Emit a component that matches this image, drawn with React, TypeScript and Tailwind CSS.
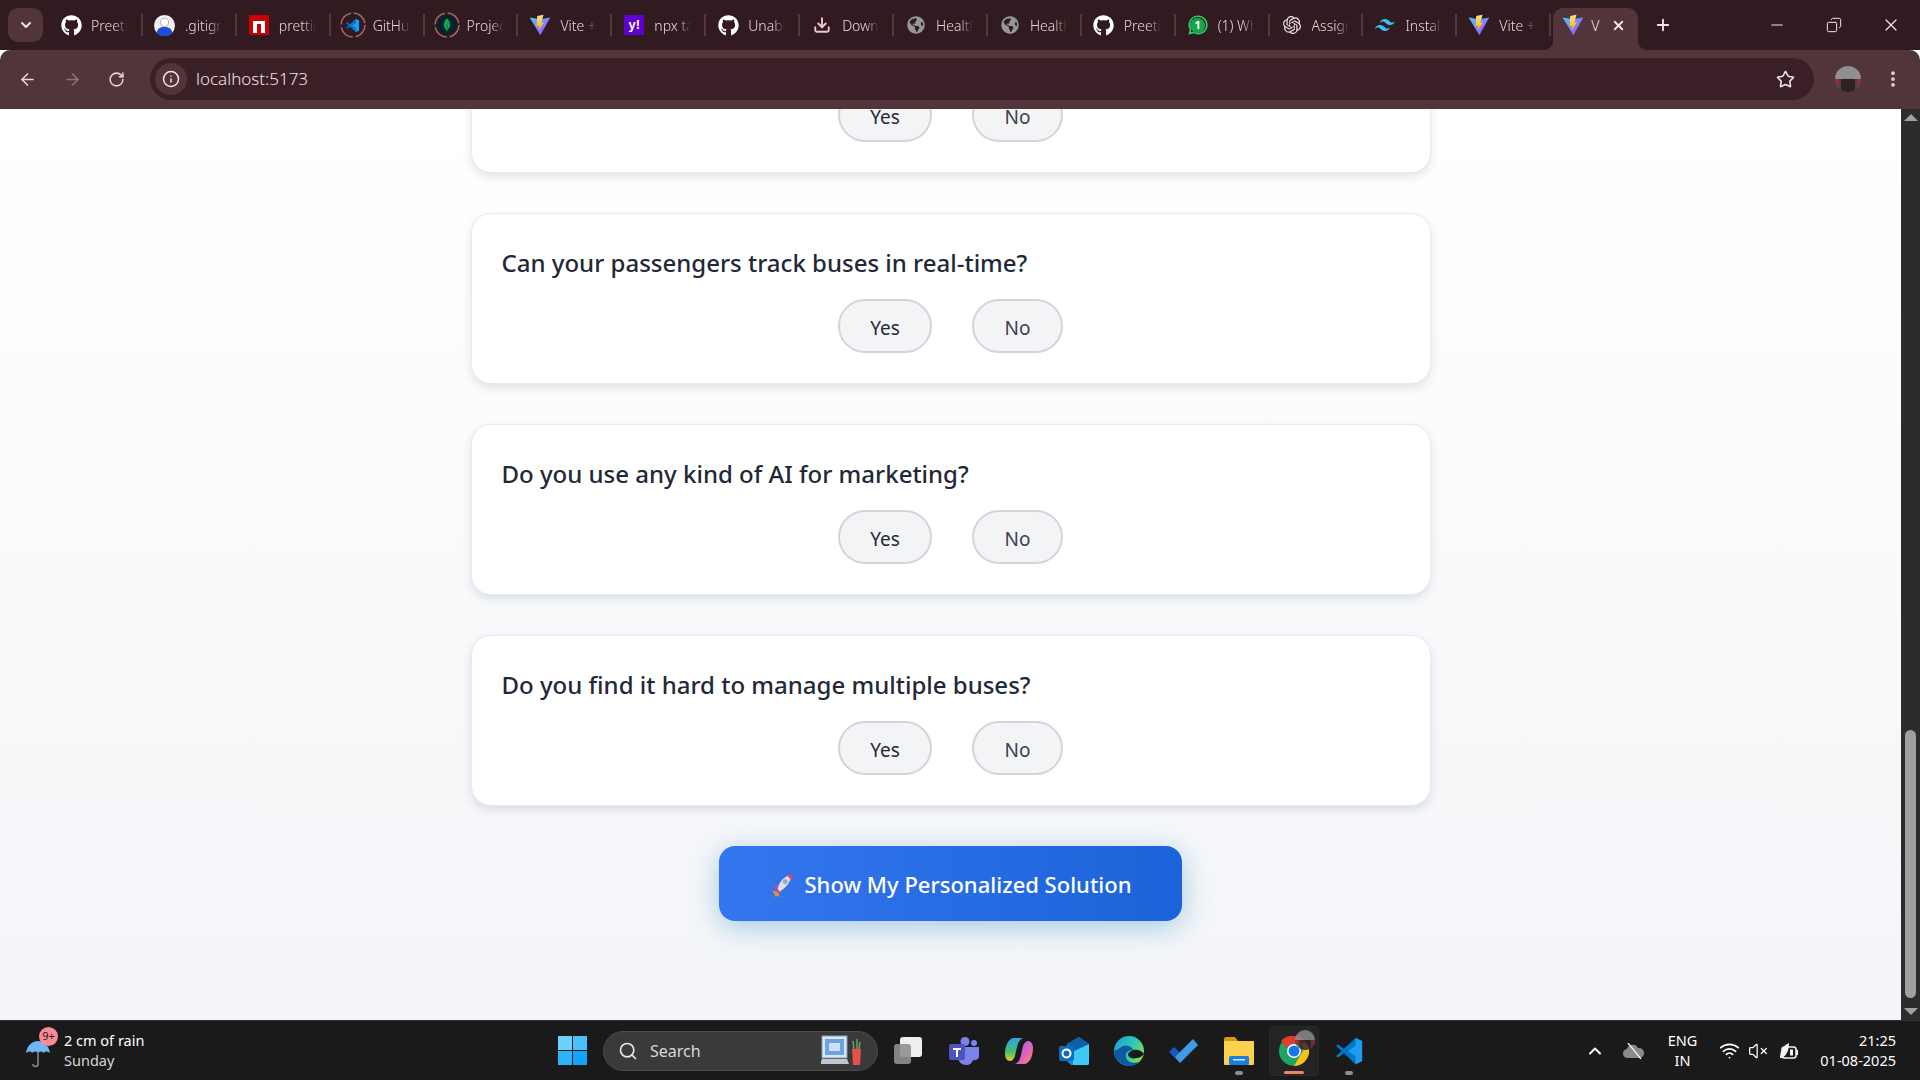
import type { ReactNode } from "react"
import { ArrowLeft, ArrowRight, RotateCw, Info, Star, ChevronDown, ChevronUp, Plus, Minus, X, Download, Search, Copy, EllipsisVertical, VolumeX, Wifi } from "lucide-react"
import { FaGithub, FaGlobeAmericas, FaWhatsapp } from "react-icons/fa"
import { SiOpenai, SiTailwindcss, SiMongodb } from "react-icons/si"

function ViteIcon() {
  return (
    <svg width="22" height="22" viewBox="0 0 32 32">
      <defs>
        <linearGradient id="vite-a" x1="0" y1="0" x2="1" y2="1">
          <stop offset="0" stopColor="#41d1ff" />
          <stop offset="1" stopColor="#bd34fe" />
        </linearGradient>
        <linearGradient id="vite-b" x1="0" y1="0" x2="0" y2="1">
          <stop offset="0" stopColor="#ffea83" />
          <stop offset="1" stopColor="#ffa800" />
        </linearGradient>
      </defs>
      <path d="M1 5l15 2.500L31 5 16.500 31z" fill="url(#vite-a)" />
      <path d="M21 1l-9 2-1 15 4-1-1 7 8-12-4 1 3-12z" fill="url(#vite-b)" />
    </svg>
  )
}

function VsCodeIcon({ size = 20 }: { size?: number }) {
  return (
    <svg width={size} height={size} viewBox="0 0 32 32">
      <path d="M23 2l7 3.400v21.200L23 30 10.500 18.500 4.500 23 2 21.500 8 16 2 10.500 4.500 9l6 4.500z" fill="#0078c8" />
      <path d="M23 2l7 3.400v21.200L23 30V21.500L15 16l8-5.500z" fill="#1f9cf0" />
    </svg>
  )
}

function DashedRing({ children }: { children: ReactNode }) {
  return (
    <div className="relative flex h-[26px] w-[26px] items-center justify-center">
      <svg className="absolute inset-0" width="26" height="26" viewBox="0 0 26 26">
        <circle cx="13" cy="13" r="12" fill="none" stroke="#a8686f" strokeWidth="1.500" strokeDasharray="16 3" />
      </svg>
      {children}
    </div>
  )
}

const tabs: { title: string; icon: ReactNode }[] = [
  { title: "Preeti", icon: <FaGithub size={21} color="#fff" /> },
  {
    title: ".gitignore",
    icon: (
      <svg width="21" height="21" viewBox="0 0 20 20">
        <circle cx="10" cy="10" r="10" fill="#f1f1f1" />
        <circle cx="10" cy="7" r="4" fill="#fff" stroke="#888" strokeWidth="0.600" />
        <path d="M2.500 17c1-4 3-5.500 7.500-5.500s6.500 1.500 7.500 5.500a10 10 0 0 1-15 0z" fill="#1d4ed8" />
      </svg>
    ),
  },
  {
    title: "prettier",
    icon: (
      <div className="flex h-5 w-5 items-center justify-center bg-[#cb0000]">
        <div className="mt-[3px] h-[12px] w-[12px] border-x-[4px] border-t-[3px] border-white" />
      </div>
    ),
  },
  { title: "GitHub", icon: <DashedRing><VsCodeIcon size={15} /></DashedRing> },
  {
    title: "Project",
    icon: (
      <DashedRing>
        <div className="flex h-5 w-5 items-center justify-center rounded-full bg-[#06232b]">
          <SiMongodb size={14} color="#13aa52" />
        </div>
      </DashedRing>
    ),
  },
  { title: "Vite + React", icon: <ViteIcon /> },
  {
    title: "npx tailwind",
    icon: (
      <div className="flex h-5 w-5 items-center justify-center bg-[#5f01d1] font-['Liberation_Sans',sans-serif] text-[13px] font-bold text-white">
        y!
      </div>
    ),
  },
  { title: "Unable", icon: <FaGithub size={21} color="#fff" /> },
  { title: "Download", icon: <Download size={18} color="#ecc9cd" strokeWidth={2.500} /> },
  { title: "Health", icon: <FaGlobeAmericas size={18} color="#93979c" /> },
  { title: "Health", icon: <FaGlobeAmericas size={18} color="#93979c" /> },
  { title: "Preeti", icon: <FaGithub size={21} color="#fff" /> },
  {
    title: "(1) WhatsApp",
    icon: (
      <div className="relative flex h-5 w-5 items-center justify-center">
        <FaWhatsapp size={22} color="#25d366" className="absolute" />
        <div className="absolute flex h-[15px] w-[15px] items-center justify-center rounded-full bg-[#1aa64a] text-[11px] font-bold text-white">
          1
        </div>
      </div>
    ),
  },
  { title: "Assignment", icon: <SiOpenai size={18} color="#f0e4e6" /> },
  { title: "Installation", icon: <SiTailwindcss size={20} color="#38bdf8" /> },
  { title: "Vite + React", icon: <ViteIcon /> },
]

function Tab({ title, icon }: { title: string; icon: ReactNode }) {
  return (
    <div className="flex h-[34px] w-[93.900px] shrink-0 items-center border-r-2 border-[#54383e] [border-image:linear-gradient(to_bottom,transparent_20%,#54383e_20%,#54383e_80%,transparent_80%)_1]">
      <div className="flex w-[42px] shrink-0 items-center justify-center pl-[2px]">{icon}</div>
      <div className="w-[37px] overflow-hidden whitespace-nowrap text-[14px] font-light text-[#e8d5d8] [mask-image:linear-gradient(to_right,black_65%,transparent)]">
        {title}
      </div>
    </div>
  )
}

function ActiveTab() {
  return (
    <div className="relative ml-[2px] flex h-[42px] w-[85px] shrink-0 items-center self-end rounded-t-[10px] bg-[#51353b] pb-[8px] pl-[9px]">
      <ViteIcon />
      <div className="ml-[7px] w-[9px] overflow-hidden whitespace-nowrap text-[14px] font-light text-[#efe1e3]">Vite</div>
      <X size={15} strokeWidth={3} color="#f2e6e8" className="ml-[11px]" />
      <div className="absolute -left-[10px] bottom-0 h-[10px] w-[10px] bg-[radial-gradient(circle_at_0_0,transparent_10px,#51353b_10.500px)]" />
      <div className="absolute -right-[10px] bottom-0 h-[10px] w-[10px] bg-[radial-gradient(circle_at_100%_0,transparent_10px,#51353b_10.500px)]" />
    </div>
  )
}

function Avatar({ size }: { size: number }) {
  return (
    <svg width={size} height={size} viewBox="0 0 26 26">
      <clipPath id={`av-${size}`}>
        <circle cx="13" cy="13" r="13" />
      </clipPath>
      <g clipPath={`url(#av-${size})`}>
        <rect width="26" height="26" fill="#8f9093" />
        <rect y="13" width="26" height="13" fill="#5b3a40" />
        <rect x="6" y="13" width="14" height="13" fill="#2b2022" />
        <rect y="13" width="4" height="6" fill="#8c2b38" />
        <rect x="22" y="13" width="4" height="6" fill="#8c2b38" />
      </g>
    </svg>
  )
}

function BrowserChrome() {
  return (
    <header className="shrink-0 font-['Noto_Sans',sans-serif]">
      <div className="flex h-[50px] items-center bg-[#311b20] pl-[8px]">
        <div className="flex h-[34px] w-[35px] shrink-0 items-center justify-center rounded-[10px] bg-[#51353b]">
          <ChevronDown size={16} strokeWidth={3} color="#f2e6e8" />
        </div>
        <div className="ml-[6px] flex items-center">
          {tabs.map((tab, i) => (
            <Tab key={i} title={tab.title} icon={tab.icon} />
          ))}
        </div>
        <ActiveTab />
        <Plus size={18} strokeWidth={2.500} color="#f2e6e8" className="ml-[16px]" />
        <div className="ml-auto flex items-center">
          <Minus size={18} strokeWidth={1.500} color="#f2e6e8" className="mr-[40px]" />
          <Copy size={16} strokeWidth={1.500} color="#f2e6e8" className="mr-[39px] -scale-x-100" />
          <X size={20} strokeWidth={1.500} color="#f2e6e8" className="mr-[19px]" />
        </div>
      </div>
      <div className="flex h-[59px] items-center rounded-t-[10px] bg-[#51353b] pb-[1px]">
        <div className="ml-[18px] flex items-center gap-[26px]">
          <ArrowLeft size={19} color="#e9d2d5" strokeWidth={2} />
          <ArrowRight size={19} color="#8d7378" strokeWidth={2} />
          <RotateCw size={17} color="#e9d2d5" strokeWidth={2.200} />
        </div>
        <div className="ml-[25px] flex h-[42px] w-[1664px] items-center rounded-full bg-[#3a2026] pl-[5px]">
          <div className="flex h-[32px] w-[32px] items-center justify-center rounded-full bg-[#51353b]">
            <Info size={18} color="#f2e6e8" />
          </div>
          <span className="ml-[9px] text-[17px] font-light text-[#f0e4e6]">localhost:5173</span>
          <Star size={19} color="#f2e6e8" className="ml-auto mr-[19px]" />
        </div>
        <div className="ml-[21px]">
          <Avatar size={26} />
        </div>
        <EllipsisVertical size={20} color="#e9d2d5" strokeWidth={2.500} className="ml-[22px]" />
      </div>
    </header>
  )
}

const questions = [
  "Do you send tickets to passengers digitally?",
  "Can your passengers track buses in real-time?",
  "Do you use any kind of AI for marketing?",
  "Do you find it hard to manage multiple buses?",
]

function QuestionCard({ question }: { question: string }) {
  return (
    <div className="shrink-0 rounded-[20px] border border-[#e2ebf6] bg-white px-[30px] pb-[30px] pt-[31px] shadow-[0_4px_10px_rgba(30,41,59,0.12)]">
      <h3 className="text-[24px] font-medium leading-[36px] text-[#1f2937]">{question}</h3>
      <div className="mt-[18px] flex justify-center gap-[40px]">
        <button className="h-[54px] w-[94px] rounded-full border-2 border-[#d1d5db] bg-[#f3f4f6] pt-[4px] text-[19px] text-[#1f2937]">Yes</button>
        <button className="h-[54px] w-[91px] rounded-full border-2 border-[#d1d5db] bg-[#f3f4f6] pt-[4px] text-[19px] text-[#374151]">No</button>
      </div>
    </div>
  )
}

function Rocket() {
  return (
    <svg width="26" height="26" viewBox="0 0 24 24">
      <path d="M3 17l4 1 2 2 1 3-3-1-1 1-1-3-2-3z" fill="#f28b2c" />
      <path d="M5 13l4-1-3 5zM11 19l1-4-5 3z" fill="#f43f6e" />
      <path d="M8 16C9 9 14 4 20 3c0 7-4 11-10 15z" fill="#e5dde2" />
      <path d="M17 3.500l5-1.500-1 6z" fill="#f43f5e" />
      <circle cx="15" cy="9" r="2" fill="#7fb2e5" stroke="#9aa0a8" strokeWidth="0.600" />
    </svg>
  )
}

function Scrollbar() {
  return (
    <div className="flex w-[19px] shrink-0 flex-col items-center bg-[#2c2c2c]">
      <div className="mt-[5px] h-0 w-0 border-x-[7px] border-b-[7px] border-x-transparent border-b-[#a0a0a0]" />
      <div className="flex flex-1 items-end pb-[10px]">
        <div className="h-[268px] w-[11px] rounded-full bg-[#a0a0a0]" />
      </div>
      <div className="mb-[5px] h-0 w-0 border-x-[7px] border-t-[7px] border-x-transparent border-t-[#a0a0a0]" />
    </div>
  )
}

function Page() {
  return (
    <div className="flex min-h-0 flex-1">
      <main className="flex min-w-0 flex-1 flex-col items-center justify-end overflow-hidden bg-gradient-to-b from-white to-[#f3f5f8] pb-[99px] font-['Noto_Sans',sans-serif]">
        <div className="flex w-[960px] shrink-0 flex-col gap-[40px]">
          {questions.map((q) => (
            <QuestionCard key={q} question={q} />
          ))}
        </div>
        <button className="mt-[40px] flex h-[75px] w-[463px] shrink-0 items-center justify-center gap-[9px] rounded-[16px] bg-gradient-to-r from-[#3476ee] to-[#1b63d8] pt-[2px] text-[22px] font-medium text-white shadow-[0_6px_28px_rgba(56,140,190,0.42)]">
          <Rocket />
          Show My Personalized Solution
        </button>
      </main>
      <Scrollbar />
    </div>
  )
}

function Umbrella() {
  return (
    <svg width="24" height="36" viewBox="0 0 24 36">
      <path d="M0 20C1 12 7 8 12 8s11 4 12 12c-3-2-5-2-6 0-2-2-4-2-6 0-2-2-4-2-6 0-1-2-3-2-6 0z" fill="#6eb7f2" />
      <path d="M12 18v13a2.500 2.500 0 0 1-5 0" fill="none" stroke="#8b8b8b" strokeWidth="1.500" />
    </svg>
  )
}

function WindowsLogo() {
  return (
    <div className="grid h-[29px] w-[29px] grid-cols-2 gap-[1px]">
      <div className="bg-[#6fd0fa]" />
      <div className="bg-[#4cc1f9]" />
      <div className="bg-[#2db2fb]" />
      <div className="bg-[#12a4fb]" />
    </div>
  )
}

function SearchArt() {
  return (
    <svg width="42" height="34" viewBox="0 0 42 34">
      <rect x="1" y="2" width="25" height="22" fill="#d6e7f7" stroke="#8f9bb0" />
      <rect x="4" y="5" width="19" height="16" fill="#6da3e3" />
      <rect x="8" y="9" width="11" height="8" fill="#cfe0f5" />
      <path d="M1 25h25l2 5H-1z" fill="#c3c6cc" />
      <path d="M31 15h9l-1 16h-7z" fill="#e2514a" />
      <path d="M33 15l-1-8M36 15v-10M38 15l1-7" stroke="#6ea060" strokeWidth="1.500" />
    </svg>
  )
}

function TaskbarIcons() {
  return (
    <div className="flex items-center">
      {/* task view */}
      <div className="relative ml-[16px] h-[27px] w-[31px]">
        <div className="absolute right-[3px] top-0 h-[20px] w-[22px] rounded-[3px] bg-[#efefef]" />
        <div className="absolute bottom-0 left-0 h-[20px] w-[17px] rounded-[3px] bg-[#8f8f8f]/90" />
      </div>
      {/* teams */}
      <svg className="ml-[24px]" width="30" height="28" viewBox="0 0 30 28">
        <circle cx="25" cy="6" r="3" fill="#7b83eb" />
        <circle cx="16" cy="4.500" r="4.500" fill="#7b83eb" />
        <path d="M9 10h21v9c0 3-3 5-6 4-1 3-3 5-7 5-5 0-8-4-8-8z" fill="#7b83eb" />
        <rect x="0" y="7" width="16" height="16" rx="2" fill="#4b53bc" />
        <path d="M4 11h8v2h-3v7H7v-7H4z" fill="#fff" />
      </svg>
      {/* copilot */}
      <svg className="ml-[26px]" width="28" height="28" viewBox="0 0 28 28">
        <defs>
          <linearGradient id="cop-a" x1="0" y1="0" x2="0" y2="1">
            <stop offset="0" stopColor="#2aa5e8" />
            <stop offset="0.600" stopColor="#45c06c" />
            <stop offset="1" stopColor="#f0c52e" />
          </linearGradient>
          <linearGradient id="cop-b" x1="0" y1="0" x2="1" y2="1">
            <stop offset="0" stopColor="#7d6cf0" />
            <stop offset="0.600" stopColor="#e75fc0" />
            <stop offset="1" stopColor="#f79a4a" />
          </linearGradient>
        </defs>
        <path d="M9 1h9c-3 1-5 4-6 9l-2 9c-1 3-3 5-5 5-3 0-5-3-5-7 0-9 4-16 9-16z" fill="url(#cop-a)" />
        <path d="M19 27h-9c3-1 5-4 6-9l2-9c1-3 3-5 5-5 3 0 5 3 5 7 0 9-4 16-9 16z" fill="url(#cop-b)" />
      </svg>
      {/* outlook */}
      <svg className="ml-[26px]" width="30" height="28" viewBox="0 0 30 28">
        <path d="M8 7l12-7 10 7v19a2 2 0 0 1-2 2H12l-4-4z" fill="#1490df" />
        <path d="M14 15l16-8v19a2 2 0 0 1-2 2H14z" fill="#3ccbf4" />
        <path d="M8 7l12-7 10 7-16 7z" fill="#0a5fa8" />
        <rect x="0" y="9" width="15" height="15" rx="2" fill="#0f6cbd" />
        <circle cx="7.500" cy="16.500" r="4" fill="none" stroke="#fff" strokeWidth="2" />
      </svg>
      {/* edge */}
      <svg className="ml-[25px]" width="30" height="30" viewBox="0 0 30 30">
        <defs>
          <linearGradient id="edge-a" x1="0" y1="0" x2="1" y2="0.600">
            <stop offset="0" stopColor="#1b9de2" />
            <stop offset="0.600" stopColor="#30c7b0" />
            <stop offset="1" stopColor="#7fdc5c" />
          </linearGradient>
        </defs>
        <circle cx="15" cy="15" r="15" fill="url(#edge-a)" />
        <path d="M0 15a15 15 0 0 0 25 11c-6 2-12 0-13-5-1-4 2-7 7-7-2-5-9-6-13-2-3 2-5 2-6 3z" fill="#0c59a4" />
        <path d="M30 18c-2-3-6-5-11-4-3 1-5 3-5 5 1 3 5 4 9 3 3 0 5-2 7-4z" fill="#1a1a1a" />
      </svg>
      {/* todo */}
      <svg className="ml-[25px]" width="30" height="24" viewBox="0 0 30 24">
        <path d="M0 13l5-5 11 11-5 5z" fill="#185abd" />
        <path d="M11 24L29 6l-5-6L6 18z" fill="#3f9ae8" />
      </svg>
      {/* explorer */}
      <div className="relative ml-[25px] h-[28px] w-[30px]">
        <svg width="30" height="28" viewBox="0 0 30 28">
          <path d="M0 2a2 2 0 0 1 2-2h9l3 4h16v6H0z" fill="#d99a0b" />
          <rect x="0" y="4" width="30" height="24" rx="1" fill="#fcd04d" />
          <rect x="5" y="19" width="20" height="9" rx="1.500" fill="#1a7fd6" />
          <rect x="9" y="22" width="12" height="1.500" fill="#cfe6fa" />
        </svg>
        <div className="absolute -bottom-[10px] left-[11px] h-[4px] w-[8px] rounded-full bg-[#8d8d8d]" />
      </div>
      {/* chrome, active */}
      <div className="relative ml-[15px] flex h-[50px] w-[50px] items-center justify-center rounded-[4px] border border-[#2a2a2a] bg-[#242424]">
        <svg width="30" height="30" viewBox="0 0 30 30">
          <circle cx="15" cy="15" r="15" fill="#1ea362" />
          <path d="M15 0a15 15 0 0 1 13 7.500H15a7.500 7.500 0 0 0-7 5L2 5A15 15 0 0 1 15 0z" fill="#e33b2e" />
          <path d="M28 7.500A15 15 0 0 1 15 30l6.500-11a7.500 7.500 0 0 0 0-11.500z" fill="#fbc116" />
          <circle cx="15" cy="15" r="7" fill="#fff" />
          <circle cx="15" cy="15" r="5.500" fill="#1a73e8" />
        </svg>
        <div className="absolute right-[3px] top-[3px] opacity-80">
          <Avatar size={20} />
        </div>
        <div className="absolute bottom-[1px] h-[3px] w-[20px] rounded-full bg-[#f0826a]" />
      </div>
      {/* vscode */}
      <div className="relative ml-[15px] h-[30px] w-[30px]">
        <VsCodeIcon size={30} />
        <div className="absolute -bottom-[9px] left-[11px] h-[4px] w-[8px] rounded-full bg-[#8d8d8d]" />
      </div>
    </div>
  )
}

function Taskbar() {
  return (
    <footer className="relative flex h-[60px] shrink-0 items-center border-t border-[#333] bg-[#1a1a1a] font-['Noto_Sans',sans-serif] text-white">
      <div className="relative ml-[26px] flex items-center">
        <Umbrella />
        <div className="absolute left-[13px] -top-[5px] flex h-[19px] w-[19px] items-center justify-center rounded-full bg-[#f98a94] text-[11px] text-[#1a1a1a]">9+</div>
        <div className="ml-[14px] -mt-[2px] text-[14.500px] leading-[20px]">
          <div>2 cm of rain</div>
          <div className="text-[#d6d6d6]">Sunday</div>
        </div>
      </div>
      <div className="absolute left-[558px] flex items-center">
        <WindowsLogo />
        <div className="ml-[16px] flex h-[40px] w-[275px] items-center rounded-full border border-[#4a4a4a] bg-[#3a3a3a] pl-[14px]">
          <Search size={20} color="#e6e6e6" strokeWidth={2} />
          <span className="ml-[12px] text-[16px] text-[#d8d8d8]">Search</span>
          <div className="ml-auto mr-[14px]"><SearchArt /></div>
        </div>
        <TaskbarIcons />
      </div>
      <div className="ml-auto flex items-center">
        <ChevronUp size={20} strokeWidth={2.500} color="#f2f2f2" />
        <svg className="ml-[18px]" width="22" height="16" viewBox="0 0 22 16">
          <path d="M5 15a4.500 4.500 0 0 1-1-9 6 6 0 0 1 11-1 5 5 0 0 1 2 10z" fill="#8a8a8a" />
          <path d="M5 0l13 16" stroke="#f2f2f2" strokeWidth="1.300" />
        </svg>
        <div className="ml-[23px] -mt-[1px] text-center text-[14.500px] leading-[20px]">
          <div>ENG</div>
          <div>IN</div>
        </div>
        <Wifi size={21} strokeWidth={2} className="ml-[22px]" />
        <VolumeX size={20} strokeWidth={1.500} className="ml-[8px]" />
        <svg className="ml-[11px]" width="20" height="18" viewBox="0 0 20 18">
          <rect x="3" y="5" width="14" height="11" rx="2.500" fill="none" stroke="#f2f2f2" strokeWidth="1.500" />
          <rect x="17" y="8" width="2" height="5" fill="#f2f2f2" />
          <path d="M1 16C1 8 5 3 10 1c0 7-2 12-7 15z" fill="#f2f2f2" />
          <rect x="11" y="7.500" width="3" height="6" fill="#f2f2f2" />
        </svg>
        <div className="ml-[21px] mr-[24px] -mt-[1px] text-right text-[14.500px] leading-[20px]">
          <div>21:25</div>
          <div>01-08-2025</div>
        </div>
      </div>
    </footer>
  )
}

export default function App() {
  return (
    <div className="flex h-screen w-full flex-col overflow-hidden">
      <BrowserChrome />
      <Page />
      <Taskbar />
    </div>
  )
}
